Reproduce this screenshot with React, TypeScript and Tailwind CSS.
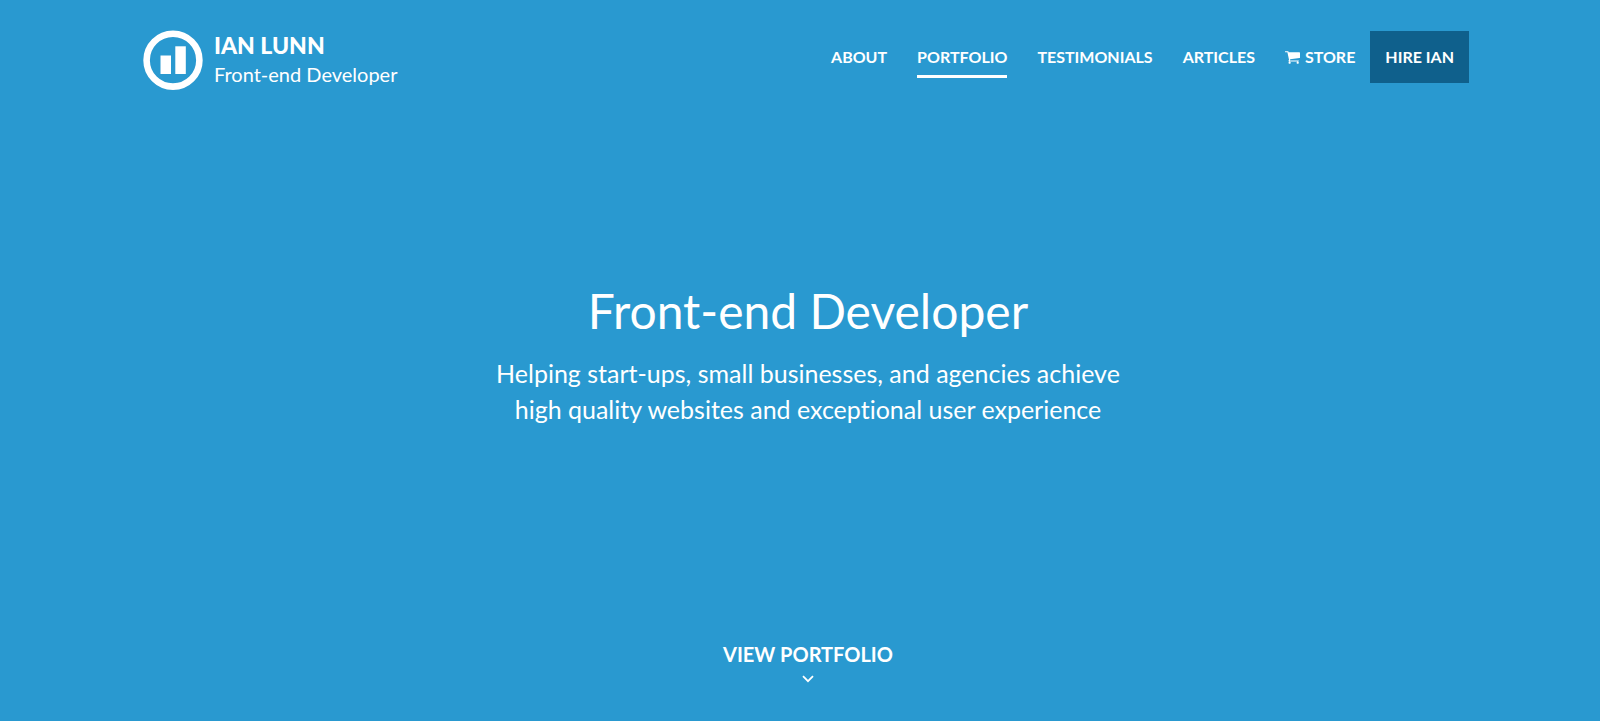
import React from "react";

const links = [
  { label: "ABOUT", href: "#about" },
  { label: "PORTFOLIO", href: "#portfolio", active: true },
  { label: "TESTIMONIALS", href: "#testimonials" },
  { label: "ARTICLES", href: "#articles" },
];

function Logo() {
  return (
    <svg viewBox="0 0 60 60" className="size-15" aria-hidden="true">
      <circle cx="30" cy="30.2" r="26.4" fill="none" stroke="#fff" strokeWidth="6.6" />
      <rect x="17.5" y="25.5" width="10.5" height="18.5" fill="#fff" />
      <rect x="32.3" y="16.3" width="10.5" height="27.7" fill="#fff" />
    </svg>
  );
}

function CartIcon() {
  return (
    <svg viewBox="64 128 1664 1664" fill="currentColor" className="mt-[6px] size-[15px]" aria-hidden="true">
      <path d="M704 1536q0 52-38 90t-90 38-90-38-38-90 38-90 90-38 90 38 38 90zm896 0q0 52-38 90t-90 38-90-38-38-90 38-90 90-38 90 38 38 90zm128-1088v512q0 24-16.5 42.5t-40.5 21.5l-1044 122q13 60 13 70 0 16-24 64h920q26 0 45 19t19 45-19 45-45 19h-1024q-26 0-45-19t-19-45q0-11 8-31.5t16-36 21.5-40 15.5-29.5l-177-823h-204q-26 0-45-19t-19-45 19-45 45-19h256q16 0 28.5 6.5t19.5 15.5 13 24.5 8 26 5.5 29.5 4.5 26h1201q26 0 45 19t19 45z" />
    </svg>
  );
}

function ChevronIcon() {
  return (
    <svg viewBox="0 0 16 16" className="size-4" aria-hidden="true">
      <path d="M3 5.2 8 10.2 13 5.2" fill="none" stroke="currentColor" strokeWidth="1.8" />
    </svg>
  );
}

export default function App() {
  return (
    <div className="flex min-h-screen flex-col bg-[#2999d0] font-['Lato',sans-serif] text-white [font-variant-ligatures:none]">
      <header className="flex items-start justify-between pt-[30px] pr-[131px] pl-[143px]">
        <a href="#top" className="flex gap-[11px]">
          <Logo />
          <span className="flex flex-col justify-center">
            <span className="text-[23px] leading-[29px] font-black">IAN LUNN</span>
            <span className="text-[20px] leading-[29px]">Front-end Developer</span>
          </span>
        </a>
        <nav className="flex pt-px text-[16px] leading-[26px] font-bold">
          {links.map((link) => (
            <a key={link.label} href={link.href} className="px-[15px] pt-[13px]">
              <span className={link.active ? "block border-b-3 border-white pb-[5px]" : "block"}>
                {link.label}
              </span>
            </a>
          ))}
          <a href="#store" className="flex items-start gap-[5px] px-[15px] pt-[13px]">
            <CartIcon />
            STORE
          </a>
          <a href="#hire" className="bg-[#0f608c] px-[15px] py-[13px]">
            HIRE IAN
          </a>
        </nav>
      </header>
      <main className="flex flex-1 flex-col items-center pl-4 text-center">
        <h1 className="mt-[191px] text-[48px] leading-[60px]">Front-end Developer</h1>
        <p className="mt-[14px] text-[25px] leading-[36px]">
          Helping start-ups, small businesses, and agencies achieve
          <br />
          high quality websites and exceptional user experience
        </p>
        <a href="#portfolio" className="mt-auto mb-[34px] flex flex-col items-center text-[20px] leading-[34px] font-bold">
          VIEW PORTFOLIO
          <ChevronIcon />
        </a>
      </main>
    </div>
  );
}
